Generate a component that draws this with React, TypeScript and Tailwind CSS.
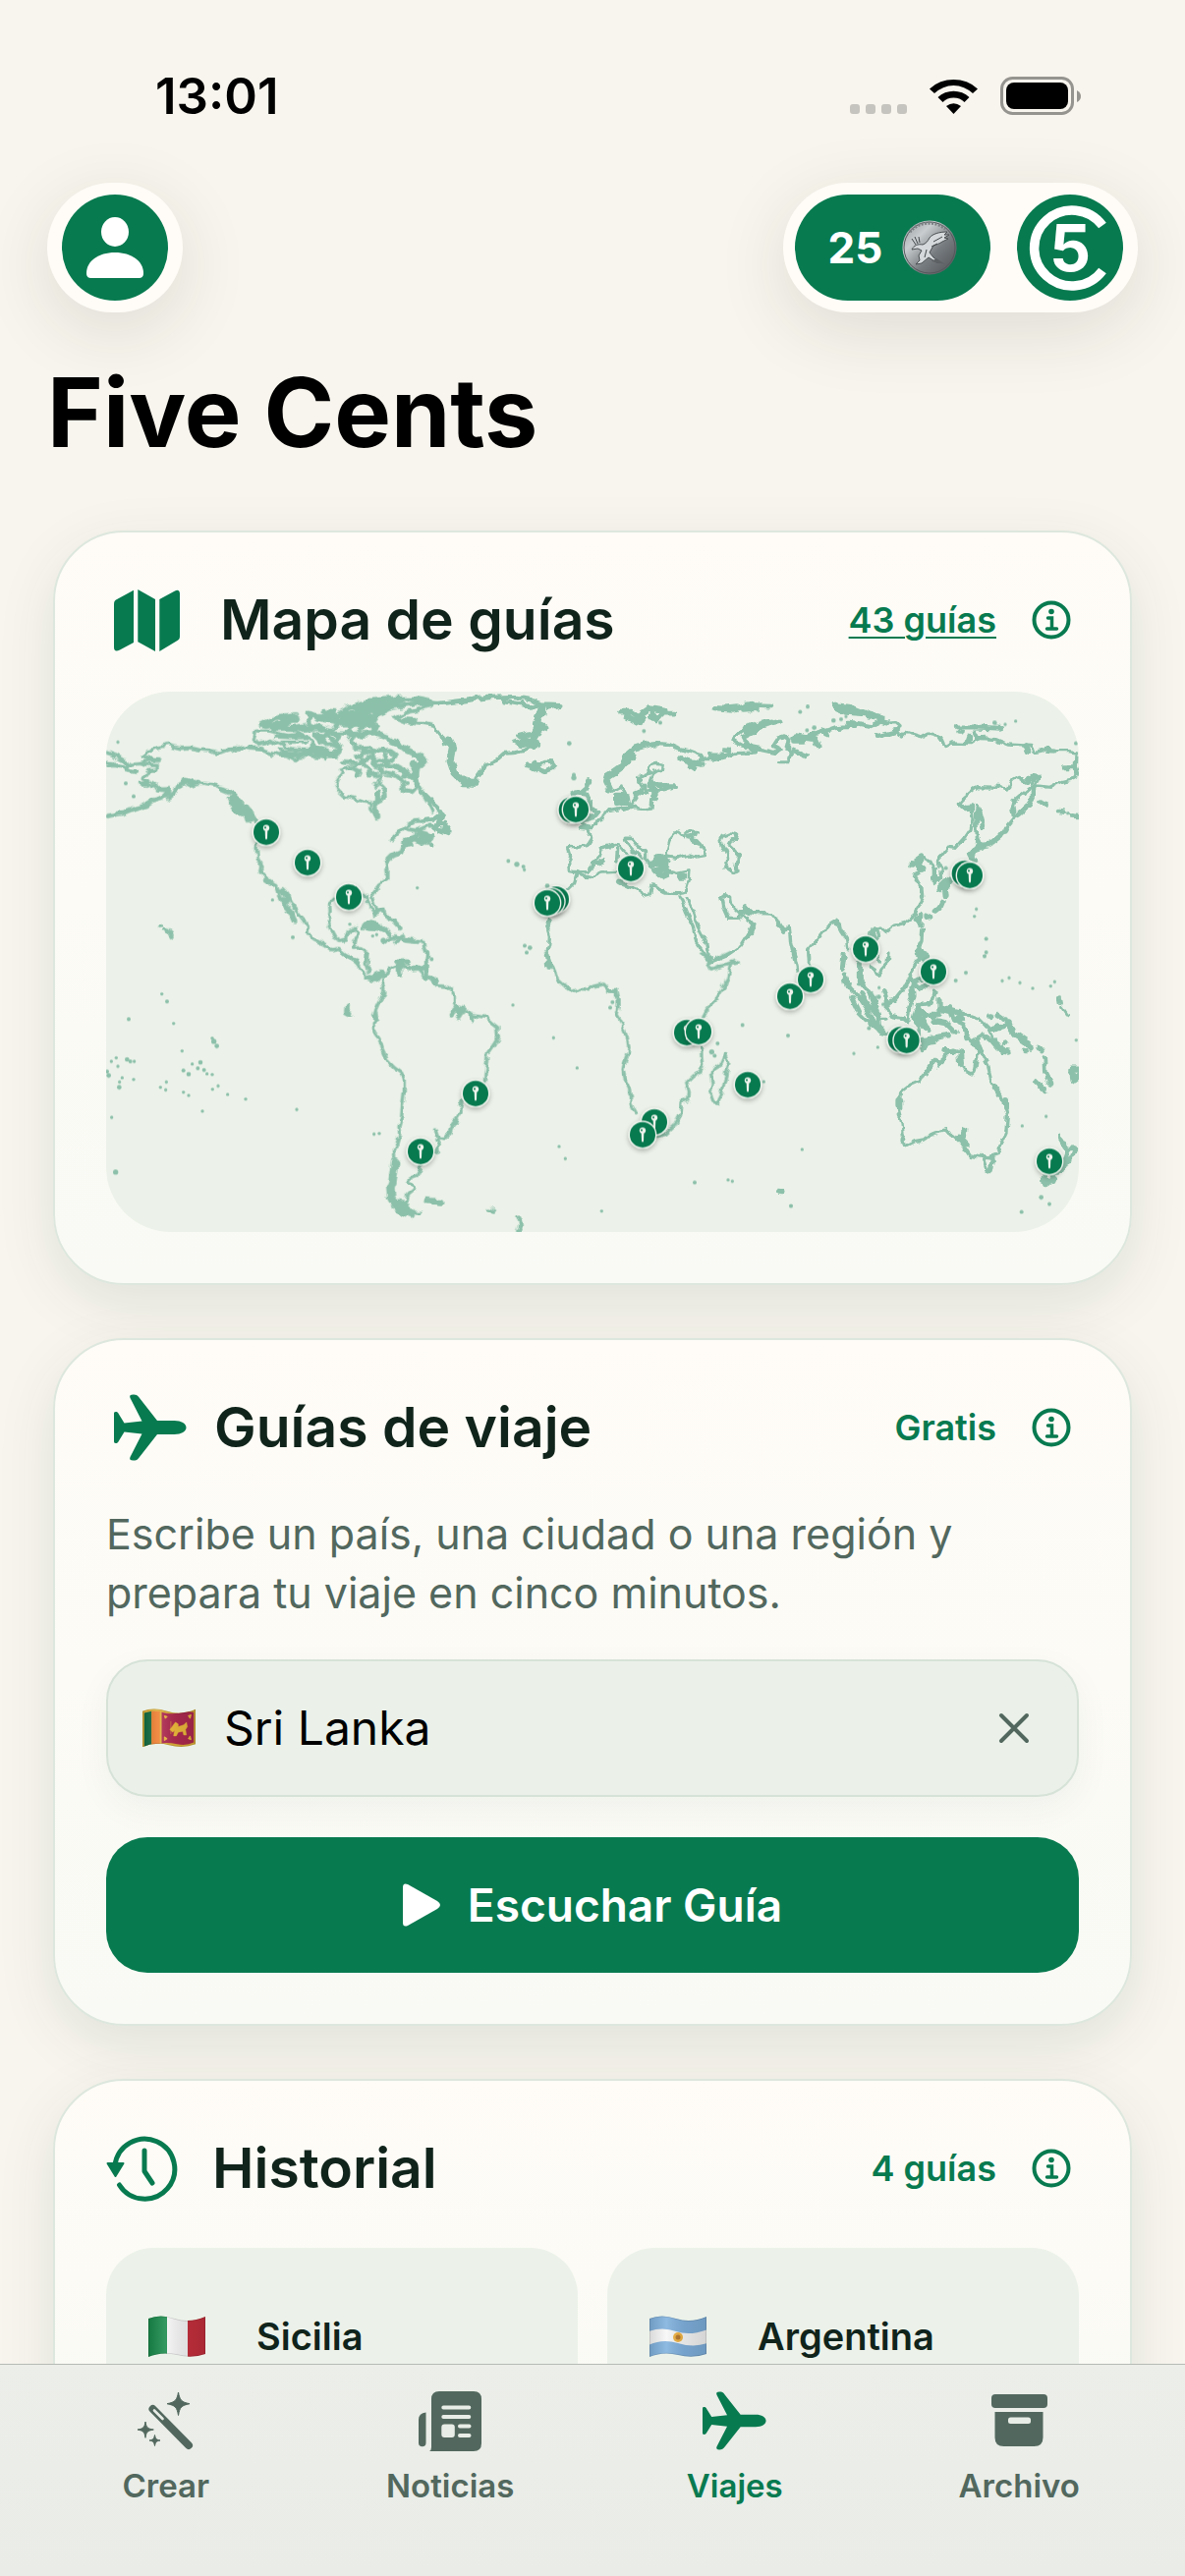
import { useState } from "react";
import type { ReactNode } from "react";

type IconProps = { className?: string };

// ── Icons ──

function MapIcon() {
  return (
    <svg className="w-[88px] h-[66px]" viewBox="0 0 88 66" fill="currentColor">
      <path d="M8 17c0-3 1-4 3-5L28 2.700V56L14 63.500c-4 2-6 1-6-2.500zM32.300 2 50 12v53L32.300 55.300zM54.300 12 70 3.500c3-1.500 5-.5 5 3V50c0 2-1 3-2.500 4L54.300 65z" />
    </svg>
  );
}

function PlaneIcon({ className }: IconProps) {
  return (
    <svg className={className} viewBox="8 0 74 68" fill="currentColor">
      <path d="M81.500 34c0 4-5 7-12 7H52L34 64c-2 3-3.500 3.500-6.500 3.500-3 0-4-1-3-3.500l12-23.500L18.500 38.500l-5.500 9c-1 2-1.800 2.500-3.200 2.500-1.500 0-1.800-.7-1.800-2.200V20.200c0-1.500.3-2.200 1.800-2.200 1.400 0 2.200.5 3.200 2.500l5.500 9 18-2L24.500 4c-1-2.500 0-3.500 3-3.500s4.500.5 6.500 3.500L52 27h17.500c7 0 12 3 12 7z" />
    </svg>
  );
}

function HistoryIcon() {
  return (
    <svg className="w-20 h-[68px]" viewBox="0 0 80 68" fill="none" stroke="currentColor" strokeWidth="5" strokeLinecap="round">
      <path d="M9 31A30.500 30.500 0 1 1 13.500 51" />
      <path d="M39 16v21l8 12" strokeLinejoin="round" />
      <path d="M1.500 29h16l-8 13z" fill="currentColor" strokeWidth="2" strokeLinejoin="round" />
    </svg>
  );
}

function InfoIcon() {
  return (
    <svg className="size-10" viewBox="0 0 40 40" fill="none" stroke="currentColor" strokeWidth="4">
      <circle cx="20" cy="20" r="17.500" />
      <circle cx="20" cy="11.500" r="2.800" fill="currentColor" stroke="none" />
      <path d="M16.500 18h4v10M15.500 29h10" strokeWidth="3.500" strokeLinecap="round" />
    </svg>
  );
}

function WandIcon() {
  return (
    <svg className="w-[57px] h-[60px]" viewBox="0 0 57 60" fill="currentColor">
      <path d="M15.500 18 52 55" stroke="currentColor" strokeWidth="8" strokeLinecap="round" />
      <path d="M17 19.500 25.500 28" stroke="#e9ede7" strokeWidth="2.600" strokeLinecap="round" />
      <path d="M41.500 1c1.500 8 3 10 11.500 11.700C44.500 14.500 43 16 41.500 24.500 40 16 38.500 14.500 30 12.700 38.500 11 40 9 41.500 1zM8 31c1 6 2 7 8.300 8C10 40.300 9 41 8 47.300 7 41 6 40.300-.3 39 6 38 7 37 8 31zM17.500 44.500c.8 4 1.500 4.700 5.500 5.500-4 .8-4.700 1.500-5.500 5.500-.8-4-1.500-4.700-5.500-5.500 4-.8 4.700-1.500 5.500-5.500z" stroke="currentColor" strokeWidth="1" strokeLinejoin="round" />
    </svg>
  );
}

function NewsIcon() {
  return (
    <svg className="w-16 h-[61px]" viewBox="0 0 64 61" fill="currentColor">
      <path d="M13 8q0-8 8-8h35q8 0 8 8v45q0 8-8 8H11q2-1 2-4zM7.500 21.500v31a3.700 3.700 0 0 1-7.500 0V29q0-7 7.500-7.500z" />
      <path d="M25.300 16.500h26M25.300 26h26M42 35.500h9.500M42 45h9.500" stroke="#e9ede7" strokeWidth="4" strokeLinecap="round" />
      <rect x="23.300" y="33.500" width="13.500" height="13.500" rx="3" fill="#e9ede7" />
    </svg>
  );
}

function ArchiveIcon() {
  return (
    <svg className="w-[57px] h-[54px]" viewBox="0 0 57 54" fill="currentColor">
      <rect width="57" height="14" rx="4" />
      <path d="M3.500 18h49v26q0 9-9 9h-31q-9 0-9-9z" />
      <rect x="17" y="23.500" width="23" height="6.500" rx="2.500" fill="#e9ede7" />
    </svg>
  );
}

function CoinIcon() {
  return (
    <svg className="size-14" viewBox="0 0 56 56">
      <defs>
        <linearGradient id="coin" x1="0" y1="0" x2="1" y2="1">
          <stop offset="0" stopColor="#8f9598" />
          <stop offset=".3" stopColor="#c9cdcf" />
          <stop offset=".6" stopColor="#777c80" />
          <stop offset="1" stopColor="#4c4f52" />
        </linearGradient>
      </defs>
      <circle cx="28" cy="28" r="27.500" fill="url(#coin)" />
      <circle cx="28" cy="28" r="26" fill="none" stroke="#54585b" strokeWidth="1" />
      <path d="M8 12A26 26 0 0 1 44 9" fill="none" stroke="#7a7f82" strokeWidth="3" strokeDasharray="2 1.500" />
      {/* bird relief */}
      <path d="M10 30c2-4 6-6 11-5 3-1 5-3 7-7 3-4 10-6 18-6l-3 3 5 0-5 3 4 1-6 3c-3 2-6 3-9 4l-4 7 4 5 7 5-4 0-8-5-7 6-6 1 4-4-1-5 3-5-4-2z" fill="#d5d9db" stroke="#4a4f52" strokeWidth="1" />
      <path d="M10 19l4 6M13 17l3 7M17 17l1 6M25 30l-2 8M32 22l9-5M30 27l6-3" fill="none" stroke="#43484b" strokeWidth="1" />
      <path d="M30 42l5-3 9 6z" fill="#5d6164" />
    </svg>
  );
}

// ── Flags ──

const FLAG_SHAPE = "M1 4q12-5 27 0t31-2v38q-14 5-29 1T1 43z";

function Flag({ id, className, children }: { id: string; className: string; children: ReactNode }) {
  return (
    <svg className={className} viewBox="0 0 60 45">
      <defs>
        <clipPath id={id}><path d={FLAG_SHAPE} /></clipPath>
        <linearGradient id={id + "-shade"} x1="0" y1="0" x2="1" y2="0">
          <stop offset="0" stopColor="#000" stopOpacity=".12" />
          <stop offset=".3" stopColor="#fff" stopOpacity=".12" />
          <stop offset=".62" stopColor="#000" stopOpacity=".08" />
          <stop offset="1" stopColor="#000" stopOpacity=".14" />
        </linearGradient>
      </defs>
      <g clipPath={`url(#${id})`}>
        {children}
        <path d={FLAG_SHAPE} fill={`url(#${id}-shade)`} stroke="#000" strokeOpacity=".15" strokeWidth="1.500" />
      </g>
    </svg>
  );
}

function FlagSriLanka() {
  return (
    <Flag id="flag-lk" className="w-[56px] h-[42px]">
      <rect width="60" height="45" fill="#e0b23a" />
      <path d="M3 6l8-2v37l-8 2z" fill="#0f6b41" />
      <path d="M11 4l9 0v37l-9 0z" fill="#ee7d2d" />
      <path d="M22 5q10 3 18 1t17-1v33q-8 4-18 2t-17-1z" fill="#b02a50" />
      <path d="M31 24l3-4 3-4 3 2v3l6-2 3-3 1 5-2 3 1 6h-3l-1-4-5 1-2 4h-3l1-6-2 2zM32 15v14" fill="#f1bd3c" stroke="#f1bd3c" strokeWidth=".5" />
      <path d="M25 9l3 1-2 2zM54 8l-3 1 2 3zM25 36l3-2-3-2zM54 35l-3-1 2-3z" fill="#f1bd3c" stroke="#f1bd3c" strokeWidth="1" />
    </Flag>
  );
}

function FlagItaly() {
  return (
    <Flag id="flag-it" className="w-[60px] h-[45px]">
      <rect width="20" height="45" fill="#188a4a" />
      <rect x="20" width="21" height="45" fill="#f6f6f6" />
      <rect x="41" width="19" height="45" fill="#c6303d" />
    </Flag>
  );
}

function FlagArgentina() {
  return (
    <Flag id="flag-ar" className="w-[60px] h-[45px]">
      <rect width="60" height="45" fill="#7fb0dd" />
      <path d="M0 17q14-5 28 0t32-2v14q-14 5-30 0T0 31z" fill="#f7f7f7" />
      <circle cx="30" cy="23" r="5" fill="#efb13f" />
      <circle cx="30" cy="23" r="2.500" fill="#b5762a" />
    </Flag>
  );
}

// ── World map ──

// Centres of the guide pins, in map units (2970 x 1650)
const PINS: [number, number][] = [
  [489, 429], [615, 522], [741, 627],
  [1421, 361], [1434, 360], [1602, 540],
  [1374, 634], [1360, 641], [1347, 645],
  [2621, 555], [2637, 561], [2319, 786], [2526, 855],
  [960, 1404], [1128, 1227],
  [1773, 1041], [1809, 1038], [1674, 1314], [1638, 1353], [1959, 1200],
  [2151, 879], [2088, 930], [2426, 1062], [2444, 1065], [2880, 1434],
];

// Small islands: x, y, radius
const ISLETS: [number, number, number][] = [
  [36, 154, 5], [60, 280, 6], [84, 320, 6], [508, 636, 5], [570, 750, 6], [744, 710, 5], [846, 760, 8], [950, 599, 5],
  [814, 746, 5], [826, 742, 5], [910, 258, 8], [921, 279, 6],
  [170, 923, 5], [186, 946, 6], [69, 1000, 6], [206, 1013, 5], [232, 1097, 5], [263, 1137, 5], [288, 1132, 7], [236, 1157, 6],
  [252, 1168, 7], [280, 1150, 6], [299, 1155, 6], [308, 1167, 5], [324, 1169, 5], [325, 1214, 5], [342, 1204, 5], [371, 1230, 5],
  [426, 1244, 5], [582, 1276, 5], [818, 1351, 5], [834, 1349, 5], [294, 1281, 5], [236, 1223, 5], [252, 1233, 5], [182, 1216, 5],
  [184, 1192, 5], [166, 1208, 5], [16, 1129, 5], [31, 1118, 5], [36, 1144, 5], [49, 1179, 5], [41, 1192, 5], [40, 1208, 7],
  [84, 1184, 5], [86, 1129, 5], [17, 1300, 5], [29, 1467, 8], [8, 1172, 7], [3, 1160, 6], [324, 1058, 5],
  [64, 1123, 7], [74, 1129, 6], [329, 1068, 8], [338, 1082, 7],
  [1242, 957, 5], [1366, 1057, 5], [1438, 1149, 5], [1383, 1389, 5], [1402, 1426, 5], [1513, 1586, 5], [1797, 1499, 6],
  [1899, 1491, 5], [1912, 1495, 5], [1867, 1074, 6], [1943, 1018, 6], [1546, 948, 6], [1539, 965, 6], [1849, 1100, 8],
  [1858, 1112, 6], [2008, 1191, 5], [994, 817, 6],
  [1414, 158, 7], [1428, 263, 8], [1428, 254, 6], [1642, 120, 6], [1228, 517, 6], [1254, 527, 8], [1274, 534, 6], [1277, 544, 5],
  [991, 466, 5], [1347, 593, 7], [1278, 776, 6], [1294, 782, 7], [1284, 797, 6], [1476, 277, 7], [1470, 284, 6], [1692, 95, 6],
  [2119, 62, 6], [2142, 46, 6], [2221, 88, 7], [2244, 84, 6], [2259, 76, 5], [2140, 118, 6], [2162, 110, 7], [2713, 95, 7],
  [2745, 100, 5], [2777, 90, 5], [2961, 158, 6], [2564, 539, 6], [2657, 664, 5], [2651, 686, 5], [2687, 755, 6], [2687, 796, 6],
  [2682, 808, 6], [2936, 371, 5], [2594, 882, 6], [2625, 858, 6], [2736, 883, 5], [2757, 874, 5], [2790, 889, 5], [2829, 906, 5],
  [2884, 899, 5], [2896, 886, 5], [2911, 932, 5], [2962, 1064, 5], [2082, 1050, 6], [2283, 1105, 5], [2356, 1086, 5],
  [2797, 1326, 5], [2870, 1297, 5], [2125, 1398, 5], [2091, 1571, 6], [2795, 1589, 6], [2855, 1544, 7], [2880, 1565, 6],
  [2808, 1098, 6], [2745, 1070, 6], [2329, 1028, 6], [2372, 955, 5], [2359, 932, 7], [2360, 904, 5], [2720, 990, 6],
];

function WorldMap() {
  return (
    <svg className="block w-full" viewBox="0 0 2970 1650" role="img" aria-label="Mapa de guías">
      <defs>
        <filter id="pin-shadow" x="-50%" y="-50%" width="200%" height="200%">
          <feDropShadow dx="0" dy="6" stdDeviation="8" floodColor="#000" floodOpacity=".28" />
        </filter>
        {/* breaks the strokes up so that the coast looks irregular */}
        <filter id="coast" filterUnits="userSpaceOnUse" x="0" y="0" width="2970" height="1650" colorInterpolationFilters="sRGB">
          <feTurbulence type="fractalNoise" baseFrequency=".035" numOctaves="2" seed="4" />
          <feDisplacementMap in="SourceGraphic" scale="22" xChannelSelector="R" yChannelSelector="G" />
        </filter>
      </defs>
      <g fill="none" stroke="#8cc0aa" strokeWidth="10" strokeLinejoin="round" strokeLinecap="round" filter="url(#coast)">
        {/* North America */}
        <g transform="translate(-24 -42)">
          <path d="M20 226l30 10 22 12 20 6 8 10 24-2 28-6 34 0-4-6-20-4-14 0-16-6 12-4 8-8 12-4 6-8 20-6 24-5 20 6 18 4 30-2 26 6 28 2 30 10 26-6 28-8 18-6 26 6 30 2 28 10 28 8 30 2 24 14 12-18 30 0 34-6 12 16 20-16" />
          <path d="M20 256l30 2-14 6 34 8 24 2-12 8 32 6M30 268l26-2M60 244l34 20M380 222l50-6M460 214l40 2" strokeWidth="12" />
          <path d="M122 262l26 6 36 0-2 14-22 0-14 10-8 16 14 6-8 6-16 2 8 4 20-4 16 10 6 10 18-2 20-2 2 12-12 10M130 240l56 12" />
          <path d="M160 248l26 2M130 324l20 2M180 340l30 2" strokeWidth="14" />
          <path d="M216 344l-20 22-30 8-16 12-40 14-30 12-50 10M216 366l18-16 12-22 20-12 16 10 24-8" strokeWidth="14" />
          <path d="M262 312l34 10 26 0 30 4 26 10" />
          <path d="M380 340l28 12 28 30-14 4 28 10 24 32 12 14M405 370l14 30 10 14M415 365l20 26 25 46" strokeWidth="19" />
          <path d="M487 500l-4 20 4 34 14 26-4 8 14 22 12 16 22 8 8 24 8 18" />
          <path d="M512 616l20 14M554 668l18 28 16 18 14 32M562 648l14 16-2 26" strokeWidth="17" />
          <path d="M576 662l22 38 28 36 14 26 0 18 18 20 32 16 20 14 22-4 20 20 24 12 18 14" />
          <path d="M722 674l-16 14 2 22-6 34 8 24 14 26 14 8 20-4 8-26 24-10 6 14-12 22-6 28 24-2 20 16-4 34M800 672l22-4 8 24 14 36 8-14-8-26-6-28 20-26 24-16" />
          <path d="M882 612l0-24-4-24 20-20 26-12 6-18 22-6" strokeWidth="15" />
          <path d="M893 496l32-32 36-26 62-4M945 462l30 4 28-12 20 0" strokeWidth="12" />
          <path d="M940 500l26-12 20 14 32-16M975 474l24 4" strokeWidth="19" />
          <path d="M762 276l-26 6 10 10-14 16-6 18 6 18 16 16 32 6 24 12 28 2-2 20 10 14 6 16 8-12-4-22-6-18 18-4 14-12-2-22-14-14 4-18-4-30" />
          <path d="M846 388l6 38M852 350l0 24" strokeWidth="19" />
          <path d="M848 296l6 8M846 330l4-4" strokeWidth="12" />
          <path d="M862 270l34-2 24 16 20 10 34 12M872 292l34 6 26 20 4 24 22 6 14-16-2-18 18 30 12 22 10 18 10 22" strokeWidth="13" />
          <path d="M750 258l40 4-22 12 30 10-8 16M800 240l10 26 24 14-12 18 26-8M790 262l34-20 28 28" strokeWidth="13" />
          <path d="M790 176l50-8 42 14 38 22 28 22 22 10 30 16-18 18-22-6 12 16-2 22-36-18-28-16" strokeWidth="19" />
          <path d="M770 188l12-18M768 196l24 18 34-2 28 12 32-4 22 18-22 22-26-10-24 6 6-24-30-8-22 20M874 232l10 26" strokeWidth="13" />
          <path d="M482 162l36 0 30 8 34 6 30-4 28 8 18 20-10 16-44 2-34-8-24-12-20-8-16 8-26 4-10-12zM540 180l44 2 60 0M560 196l74 0" />
          <path d="M660 172l30 8 24-14 22 12-14 24-24 2-20-14zM650 206l40 12 34 16 14-22-22-8M555 222l60 8 40-8 36 10 40-10M676 190l20-16 30 20M556 236l170 2" strokeWidth="14" />
          <path d="M498 142l30-14 34-8 40-4M510 148l60-8 40-14M535 154l60 0 50-6M600 160l50-6 30 4M560 128l44 4" strokeWidth="16" />
          <path d="M640 108l26 8 60 0 44-28 56-18 80-6 60 0 46 8-60 10-56 8-40 20-18 26 14 12-18 24-60-4-54 0-34-14-40-10zM690 100l30 4M672 126l60 12 70-40 80-22M720 150l60-40 60-10M760 168l30-50 60-20M790 84l60 30-50 40M740 140l90 0M700 124l50 6" strokeWidth="16" />
          <path d="M740 112l50-10 40 20-30 24-50-6zM770 92l90-16 70-4-60 26z" fill="#8cc0aa" />
          <path d="M905 120l30-12 36-8 50-22M908 122l34 14 40 4 40 5M930 126l36 2" strokeWidth="12" />
          {/* Caribbean */}
          <path d="M812 758l20-10 28 6 18 18M824 762l40 4 28 16M882 798l26-8 30 12 36 4M930 790l-20 16M868 803l8 1M848 716l22-8 8 20 24 14 20 22" strokeWidth="14" />
          <path d="M974 802l22 2 2 22 8 20 0 24M185 760l10-2M205 765l20 14 2 12" />
          <path d="M212 770l14 18M910 866l40 0" strokeWidth="14" />
        </g>
        {/* South America */}
        <g transform="translate(-24 798)">
          <path d="M745 0l24 14 20 8 14 28 22 26 14 8 8-20 14-6 18 14 10-22 22-12 16-8 16 16 38 6 20 26M820 0l-2 34 10 26M866 84l6 20 0 22-16 26-8 18-6 20" />
          <path d="M822 76l24 6 10-16 14 6M918 30l2 34M924 40l26 4M960 50l46-4-2 22" strokeWidth="16" />
          <path d="M1004 0l-4 36M848 180l2 20-10 18 2 22 16 22 10 32 16 36 22 22 20 14 8 22 0 34-6 52-2 28-8 28 2 24-8 28-8 22 2 42" />
          <path d="M846 190l2 14M760 165l-2 12 12 6" strokeWidth="16" />
          <path d="M906 640l-8 60-6 14 2 32 12 22 22 18 26 12M916 764l20 6 14 20" strokeWidth="26" />
          <path d="M984 654l-12 24-20 8-2 12 16 10-2 14-20 16-6 22 10 24 16 8 20 0" />
          <path d="M1004 756l26 2 14 2" strokeWidth="20" />
        </g>
        <g transform="translate(966 798)">
          <path d="M16 0l-4 30 2 34 22 18 8 18 34 2 16 16 6 16 0 18 8 14 20 4 20 20 44 6 18 16 20 16 2 30-14 24-20 28-2 24-4 36-2 26" />
          <path d="M8 46l12 26 18 18M88 186l16-18 12 18-6 10M110 172l14 10M148 190l4 12" strokeWidth="16" />
          <path d="M120 452l-4 20 2 14-20 30-14 32-14 18-22-2-8-24M44 570l8 18-6 14-8 4" />
          <path d="M92 526l12-14" strokeWidth="16" />
          <path d="M205 784l18 7M292 808l4 10 4 12-6 16" strokeWidth="12" />
          {/* Africa */}
          <path d="M374 0l16 30 18 30 4 20 42 38 30-10 22 5 20-12 24-6 10 10 12 16 20-6 8 26 0 24-6 26 18 30 12 30 6 38-4 24-10 26-4 20 6 26 14 32 4 44 16 30" />
          <path d="M380 6l10 34M572 118l20 2 0 14" strokeWidth="16" />
          <path d="M716 560l26-6 26-24 20-38 4-34 20-10 2-26-8-26 18-18 20-14 10-22-4-54M858 192l10-20 30-30 18-28 18-46 6-34-28 6-28 12-12-18M940 32l24-6M848 0l28 24 0-24M880 26l58-28" />
          <path d="M925 308l-12 30-26 16-6 20 4 26-6 30 8 24 14 4 10-20 10-40 10-44 4-18z" />
        </g>
        {/* Greenland, Europe and North Africa */}
        <g transform="translate(966 -42)">
          <path d="M0 76l50 2 70-8 80-10 70-2 60 8M250 72l80 14 30-6M340 70l26 10 58 2-40 10M300 78l26 10" strokeWidth="14" />
          <path d="M366 86l-6 26-12 30 22 10-24 14-10 24 6 14M354 120l-4 50" strokeWidth="24" />
          <path d="M338 168l-42 10 24 10-40 10 24 8 32-8" strokeWidth="16" />
          <path d="M340 204l-28 18-28 6-32 2-20 18-24 12-18 4-10 24-12 16-6 22-20-10-16 2" strokeWidth="12" />
          <path d="M0 140l36 8 22 30 8 16" />
          <path d="M78 186l14 26-8 42 12 34 24 24M70 200l20 6M96 290l30 30 32 2" strokeWidth="21" />
          {/* Labrador and Newfoundland */}
          <path d="M0 250l8 2M0 348l18 18 12 14 14 12 14 24-22 16-36 4" strokeWidth="13" />
          <path d="M0 488l14-2M40 458l12-14 8-26M56 464l22 8M66 446l14 22" strokeWidth="17" />
          <path d="M24 508l2 2" />
          {/* Iceland */}
          <path d="M320 268l24-12 8 10 26-12 20 2 8 10-12 12-22 8-16-6-12-14z" strokeWidth="12" />
          <path d="M322 262l20 12" strokeWidth="18" />
          {/* Svalbard and Novaya Zemlya */}
          <path d="M606 104l34 0 30 22-16 8-30-18M670 108l24-16 46 8-18 22-30-4M738 110l28 0M700 104l14 20" strokeWidth="17" />
          <path d="M892 92l60 4 40-12 30 4M920 94l40-4M980 96l40-2" strokeWidth="16" />
          {/* Scandinavia */}
          <path d="M620 240l28-24 34-10 34-6 36 2 28 12" strokeWidth="16" />
          <path d="M638 232l-16 20-14 20-22 16-20 12-6 18 10 20" strokeWidth="22" />
          <path d="M780 214l36 8 38 14 6 10-16 10-30-4-30-8M578 346l14-8 16-8 10 20 10 24 4 20 22 4" />
          <path d="M590 358l34 0 4 24-38 4z" strokeWidth="16" fill="#8cc0aa" />
          <path d="M786 246l40 14 28 4M818 270l12 8M876 230l10 18M886 238l26 0M920 222l14 2" strokeWidth="17" />
          <path d="M640 386l14-20-4-18 24-10-12-20 0-14 32-14-2-22 20-6 18 2-2 14-26 16-8 22 12 14-14 10 30 0 50-6-30 10-32 2-6 16 14 4-20 10-2 20-34 4-20-2-30 8" />
          <path d="M690 326l76 0M708 340l4 16M660 350l14 4M676 330l8 20" strokeWidth="14" />
          <path d="M860 250l30 0 30-8 40-14 60-2M1020 150l-40 10-34 30 30 16 24 4 20 14M1020 160l-40 20 12 22" strokeWidth="12" />
          {/* British Isles */}
          <path d="M456 356l30-8 14-12 12-22M470 350l28 6 8 20 10 20 18 14-12 16-20 6-14 2" strokeWidth="15" />
          <path d="M478 460l24 2 10 18 6 12-12 20-28 4-26-2-6 10 6 20-6 20 2 26 24 4 10 12 30 2 40-14 40-2 24 0M470 596l36-4 14-14 0-14 18-20 6-22 28-6 14-8 14 2 14 18 30 22 22 12M505 452l-24 6 32 0 20-18 20-10 8-22 32-6 30-2" />
          <path d="M478 440l26 14M530 566l24-8M594 522l-2 34" strokeWidth="14" />
          <path d="M622 490l16 0 18 22 26 16 0 24 12 16M620 496l10 18 40 38M630 516l34 30" strokeWidth="11" />
          <path d="M700 570l24-24 18 8-10 26-20 6 20 20 14-6-6-24-28-20" strokeWidth="20" />
          <path d="M750 546l26 4 34-10 24 6 26-4 2-16-22-26-18-2-6-12 28-16-34-2-14 14-16-14-24 26-8 30-4 16zM754 592l22 6 30-6 10-2-2 26-10 36-22 4-40-2-32-16-12-2-6 26-8 4-26-18-28-10-20-10" />
          <path d="M810 486l24-6M788 606l12 0M602 622l14 8" strokeWidth="16" />
          <path d="M918 484l24-10 20 6-4 16-16-2-8 14 20 18 14 16-6 16 4 32-20 6-22-14 8-28-8-26-14-28z" />
          <path d="M952 486l4 8M964 542l-6 40" strokeWidth="14" />
          {/* Red Sea and Arabia */}
          <path d="M786 666l20 52 20 40 10 50 24 32 16 30M806 674l20 40 14 44 26 50 12 60 50-20 44-30 20-32 16-32-24-26-22-14M914 670l10-8 14 10 2 18 20 20 14-2 14-10 4 20 28 4M914 670l6 30 16 36 28 0 20-26" />
          <path d="M990 706l-14 10" strokeWidth="16" />
          <path d="M442 646l22-22 8-26M388 736l-8 24 8 28-2 32-8 30 2 24" />
          <path d="M380 846l10 30" strokeWidth="16" />
        </g>
        {/* Asia */}
        <g transform="translate(1956 -42)">
          <path d="M0 90l30-6 40 2M0 82l20-2M0 162l30-10 68-16M0 156l40-16 40-4" strokeWidth="17" />
          <path d="M0 210l30 6 56 12 16-10-22-12 14-22 26-8 10 20-6 20 14 16-10 24-32 0 30 0M0 228l30-2M130 214l0 34" strokeWidth="12" />
          <path d="M140 186l30-4 40 6 6 18M146 196l30 0M150 176l32 6 60-20 30-10 46-4 30-8 30 6 30-14 20 6M144 222l34 14M240 170l8 4M310 136l40 4" strokeWidth="15" />
          <path d="M276 98l40-8 50 20 46 14M272 86l46 4-30 10M300 104l60 4" strokeWidth="19" />
          <path d="M416 136l40-2 12 12-10 20-60 14M462 168l10 12 14-14 48 14 22-12 30 14 14 20 10 6 16-10 60 2 24-16 50 4 40 16 70 4 6 16 24-6 30 6 50 0 28 4-4 76-8 4-36 8-34 18-40-4-20 4-26 20-24 20-4 20 6 36" />
          <path d="M400 178l60-16M592 182l6 14M694 166l10 20 20-8M646 150l50 0 80 4M650 166l8 0M850 206l10 20M916 220l24 2M970 272l34 0 6 20M680 180l-4 12" strokeWidth="15" />
          <path d="M820 424l44-42 14-40 16-44-24 0-18 20-22-14-24 12-12 26-20-8-70-2-44 36-14 16M820 424l-30 36" />
          <path d="M880 300l-10 20M874 340l0 22-14 30-30 26M650 384l16 14 20-2" strokeWidth="16" />
          <path d="M688 398l2 30-6 34-20 30-26 28-22-4-20 24-16 18 14 28 2 26-10 10" />
          <path d="M704 390l8 30 10 36M704 400l-4 50 2 40 10 20M712 510l-14 14-10 20 6 12" strokeWidth="14" />
          <path d="M702 500l20 10 24-4 28-22M702 524l40-14" strokeWidth="14" />
          <path d="M684 534l12 22" strokeWidth="18" />
          <path d="M778 478l4-4M790 466l4-6M898 380l16 6M954 408l14 2M990 418l22 2" strokeWidth="14" />
          <path d="M590 642l20-20 20-14-24 36 2 20M596 686l-6 14-12 10M550 732l12-2" strokeWidth="18" />
          <path d="M574 626l2-24-8-30-20-20-22 20 16 14-24 14-4 14 18 30 4 34-18 30-4 16-30 24-34 8-16 12-10 8-16-14-18 6-4 20 12 16 6-14-6-20-22 14-2 14 20 26 12 40" />
          <path d="M504 570l32-24-14 26 14 16M574 580l0 44M534 640l2 30M570 610l20 0" strokeWidth="16" />
          <path d="M520 736l10-8-2 26zM536 770l-2 30-10 24 6 30 14 10M528 840l20 10" strokeWidth="16" />
          <path d="M0 708l16 10 60 2 20 24 16 28 18-14 4 52 14 62M0 738l24 14-10 30-16 16M190 870l-2-38 40-48 24-28 22-14 14 28 16 24 4 34M300 846l-6 24" />
          <path d="M270 748l14 6M100 760l12 12" strokeWidth="15" />
        </g>
        {/* South-east Asia and Oceania */}
        <g transform="translate(1956 798)">
          <path d="M144 0l12 54M190 0l2 40M432 0l-2 30-18 20-12 20-10-20-14-10" />
          <path d="M296 8l-4 40M298 66l6 28M346 30l0 60" strokeWidth="15" />
          <path d="M350 86l28 34 14 40 10 30-28-30-24-40M312 102l34 40 28 40 20 34 24 24M320 136l24 50 20 20" strokeWidth="15" />
          <path d="M402 196l2 40M370 206l44 36 28 14" strokeWidth="14" />
          <path d="M536 0l-24 40-18 40-20 34-24 30-18 6-12-36 8 20 0 40 10 20 40 8 12 10 6-46 10-34-4-26 8-24-14-16M530 10l12 14M500 80l12 10 26-14M402 200l20 0" strokeWidth="12" />
          <path d="M520 0l30 10M514 100l12 8 18-12 24-4" strokeWidth="17" />
          <path d="M574 120l-12 36-42 4 0 40 24 30M514 166l36 20-14 14 20 36M526 166l4 40M520 160l-10 40 14 24M540 180l-16 6M524 250l0-16" strokeWidth="14" />
          <path d="M588 140l0 44M596 170l60 14-20 24 20-6M576 206l30 6 30 30M620 170l10 34M550 190l26 0" strokeWidth="16" />
          <path d="M536 290l30-26 50-12M530 266l40-6 50-8M540 276l34-4" strokeWidth="14" />
          <path d="M640 212l24 10 10 36 20 16 6 10 0-20 20-12 24 14 20 24 20 2M660 184l50 18 30 30 30 4 20-26M740 238l14 26 16 12" strokeWidth="11" />
          <path d="M664 230l6 30M750 232l34-8 14-14M766 188l20 14M740 192l6 2M758 270l18 18M786 298l12 2M788 272l4 2" strokeWidth="16" />
          <path d="M796 212l24 38 26 16 20 24M820 246l40 26" strokeWidth="18" />
          <path d="M846 300l8 2M896 290l8 10M908 320l2 40 10 20M922 384l8 16M880 394l32 32M900 402l14 12" strokeWidth="14" />
          <path d="M994 356l30 0M994 362l4 26 20-16" strokeWidth="19" />
          <path d="M954 134l4 20M962 166l14 20 8 2" />
          {/* Australia */}
          <path d="M704 280l0 40-8 44-8 8-20-10-18-22 6-38-26-8-20 6-12 32-12 12-10-18-20 20-14 20-14 24-32 14-26 20-4 30-2 28 10 40 4 34-4 18 18 12 24-12 24-4 20-16 44-12 28 16 22 22 14 20 12 18 30 6 14-8 14 8 30-10 6-30 18-40 4-46-8-40-16-30-24-36-12-50-16-34z" />
          <path d="M604 300l26 0M600 326l-12 10M564 342l-20 26M466 450l0 20M664 542l-8 30M648 560l20 20M652 310l2 30M758 410l12 18M792 450l0 16M698 270l10 24" strokeWidth="18" />
          <path d="M718 618l8 22 6 20 14 4 6-30-2-12M720 620l26 6" strokeWidth="13" />
          {/* New Zealand */}
          <path d="M954 560l16 22 14 18 18-2-8 26-20 14-16 30-20 6-18-2-14 12 6 16 18-4 12-26M980 600l-10 30" strokeWidth="13" />
          <path d="M960 570l14 24M908 686l4 20M96 728l14 2" strokeWidth="18" />
        </g>
      </g>
      <g fill="#8cc0aa">
        {ISLETS.map(([x, y, r]) => (
          <circle key={`${x}-${y}`} cx={x} cy={y} r={r} />
        ))}
      </g>
      {PINS.map(([x, y]) => (
        <g key={`${x}-${y}`} transform={`translate(${x} ${y})`}>
          <circle r="43" fill="#eef3ec" filter="url(#pin-shadow)" />
          <circle r="39" fill="#087a50" />
          <circle cy="-13" r="9.500" fill="#eef3ec" />
          <circle cx="-3" cy="-14" r="3" fill="#087a50" />
          <path d="M-4-8h8L3 20q-3 5-6 0z" fill="#eef3ec" />
        </g>
      ))}
    </svg>
  );
}

// ── Layout pieces ──

type CardProps = {
  icon: ReactNode;
  title: string;
  action: ReactNode;
  children: ReactNode;
};

function Card({ icon, title, action, children }: CardProps) {
  return (
    <section className="rounded-[72px] border-2 border-[#dde7dd] bg-linear-to-b from-[#fffcf7] to-[#f9faf5] p-[52px] shadow-[0_18px_60px_rgba(8,60,40,0.1)]">
      <div className="flex h-[74px] items-center justify-between pr-2 text-[#087a50]">
        <div className="flex items-center gap-7">
          {icon}
          <h2 className="text-[57px] leading-[74px] font-semibold text-[#10241b]">{title}</h2>
        </div>
        <div className="flex items-center gap-9 text-[36px] font-semibold">
          {action}
          <button aria-label={`Información: ${title}`}><InfoIcon /></button>
        </div>
      </div>
      {children}
    </section>
  );
}

const RECENT = [
  { name: "Sicilia", flag: <FlagItaly /> },
  { name: "Argentina", flag: <FlagArgentina /> },
];

const TABS = [
  { id: "crear", label: "Crear", icon: <WandIcon /> },
  { id: "noticias", label: "Noticias", icon: <NewsIcon /> },
  { id: "viajes", label: "Viajes", icon: <PlaneIcon className="w-[65px] h-[60px]" /> },
  { id: "archivo", label: "Archivo", icon: <ArchiveIcon /> },
];

export default function App() {
  const [query, setQuery] = useState("Sri Lanka");
  const [tab, setTab] = useState("viajes");

  return (
    <div className="flex h-screen flex-col overflow-hidden bg-[#f8f5ee] font-[Inter,'Liberation_Sans',sans-serif] text-black">
      <main className="min-h-0 flex-1 overflow-y-auto [scrollbar-width:none]">

        {/* Status bar */}
        <div className="flex h-[136px] items-center justify-between pt-[60px] pr-[106px] pl-[158px]">
          <span className="text-[51px] leading-[60px] font-semibold">13:01</span>
          <svg className="w-[236px] h-10" viewBox="0 0 236 40">
            <g fill="#c6c4be">
              <rect x="1" y="28" width="10" height="10" rx="3" />
              <rect x="17" y="28" width="10" height="10" rx="3" />
              <rect x="33" y="28" width="10" height="10" rx="3" />
              <rect x="49" y="28" width="10" height="10" rx="3" />
            </g>
            <path d="M82 12.500a36 36 0 0 1 49 0l-5 4.500a28 28 0 0 0-39 0zM90.500 21a23.500 23.500 0 0 1 32 0l-5 5a16 16 0 0 0-22 0zM99 30q7.500-5.500 15 0l-7.500 8z" />
            <rect x="155.500" y="1.500" width="72" height="36" rx="11" fill="none" stroke="#96948f" strokeWidth="3" />
            <rect x="160" y="6" width="63" height="27" rx="8" />
            <path d="M232 14q4 2 4 6t-4 6z" fill="#96948f" />
          </svg>
        </div>

        {/* Top actions */}
        <div className="mt-[50px] flex items-center justify-between px-12">
          <button aria-label="Perfil" className="flex h-[132px] w-[138px] items-center justify-center rounded-full bg-[#fffcf7] shadow-[0_18px_72px_rgba(40,40,30,0.12)]">
            <svg className="size-[108px]" viewBox="0 0 108 108">
              <circle cx="54" cy="54" r="54" fill="#087a50" />
              <ellipse cx="54" cy="38" rx="14" ry="15" fill="#fff" />
              <path d="M54 59c17 0 29 9 29 21 0 4-2 5-5 5H30c-3 0-5-1-5-5 0-12 12-21 29-21z" fill="#fff" />
            </svg>
          </button>
          <div className="flex h-[132px] items-center gap-[27px] rounded-full bg-[#fffcf7] pr-[15px] pl-3 shadow-[0_18px_72px_rgba(40,40,30,0.12)]">
            <button className="flex h-[108px] w-[199px] items-center justify-center gap-5 rounded-full bg-[#087a50] text-[44px] font-bold text-white">
              25
              <CoinIcon />
            </button>
            <button aria-label="Five Cents" className="rounded-full">
              <svg className="size-[108px]" viewBox="0 0 108 108">
                <circle cx="54" cy="54" r="54" fill="#087a50" />
                <path d="M87 31.500A38.500 38.500 0 1 0 87 77.500" fill="none" stroke="#fff" strokeWidth="9.500" />
                <text x="54" y="78" textAnchor="middle" fontSize="66" fontWeight="700" fill="#fff">5</text>
              </svg>
            </button>
          </div>
        </div>

        <h1 className="mt-[42px] px-12 text-[97px] leading-[120px] font-bold">Five Cents</h1>

        <div className="mt-[60px] flex flex-col gap-[54px] px-[54px] pb-[54px]">
          <Card icon={<MapIcon />} title="Mapa de guías" action={<a href="#guias" className="underline decoration-2 underline-offset-4">43 guías</a>}>
            <div className="mt-9 overflow-hidden rounded-[66px] bg-[#ecf2e9]">
              <WorldMap />
            </div>
          </Card>

          <Card icon={<PlaneIcon className="ml-2 h-[68px] w-[74px]" />} title="Guías de viaje" action={<span>Gratis</span>}>
            <p className="mt-[41px] text-[43px] leading-[60px] text-[#52685e]">
              Escribe un país, una ciudad o una región y prepara tu viaje en cinco minutos.
            </p>
            <div className="mt-[38px] flex h-[140px] items-center gap-7 rounded-[42px] border-2 border-[#d6e2d7] bg-[#ebf1e9] pr-[46px] pl-[34px] shadow-[0_12px_36px_rgba(8,60,40,0.05)]">
              <FlagSriLanka />
              <input
                aria-label="Destino"
                value={query}
                onChange={(e) => setQuery(e.target.value)}
                className="min-w-0 flex-1 bg-transparent text-[48px] leading-[60px] outline-none"
              />
              <button aria-label="Borrar" onClick={() => setQuery("")} className="text-[#52685e]">
                <svg className="size-9" viewBox="0 0 36 36" fill="none" stroke="currentColor" strokeWidth="4" strokeLinecap="round">
                  <path d="M5 5l26 26M31 5L5 31" />
                </svg>
              </button>
            </div>
            <button className="mt-[41px] flex h-[138px] w-full items-center justify-center gap-7 rounded-[42px] bg-[#087a50] text-[46px] font-semibold text-white">
              <svg className="h-[44px] w-[38px]" viewBox="0 0 38 44" fill="currentColor">
                <path d="M0 4q0-5 5-3l30 17q6 4 0 8L5 43q-5 2-5-3z" />
              </svg>
              Escuchar Guía
            </button>
          </Card>

          <Card icon={<HistoryIcon />} title="Historial" action={<span>4 guías</span>}>
            <div className="mt-11 grid grid-cols-2 gap-[30px]">
              {RECENT.map(({ name, flag }) => (
                <button key={name} className="flex h-[180px] items-center gap-[51px] rounded-[48px] bg-[#ecf2e9] px-[42px] text-[38px] font-semibold text-[#10241b]">
                  {flag}
                  {name}
                </button>
              ))}
            </div>
          </Card>
        </div>
      </main>

      {/* Tab bar */}
      <nav className="grid h-[216px] shrink-0 grid-cols-4 items-start border-t border-[#b6bbb5] bg-linear-to-b from-[#ebeee9] to-[#e9ece7] px-6 pt-[26px]">
        {TABS.map(({ id, label, icon }) => (
          <button
            key={id}
            onClick={() => setTab(id)}
            className={`flex flex-col items-center gap-[13px] text-[33px] leading-[44px] font-semibold ${
              tab === id ? "text-[#087a50]" : "text-[#52685e]"
            }`}
          >
            <span className="flex h-[62px] items-center">{icon}</span>
            {label}
          </button>
        ))}
      </nav>
    </div>
  );
}
